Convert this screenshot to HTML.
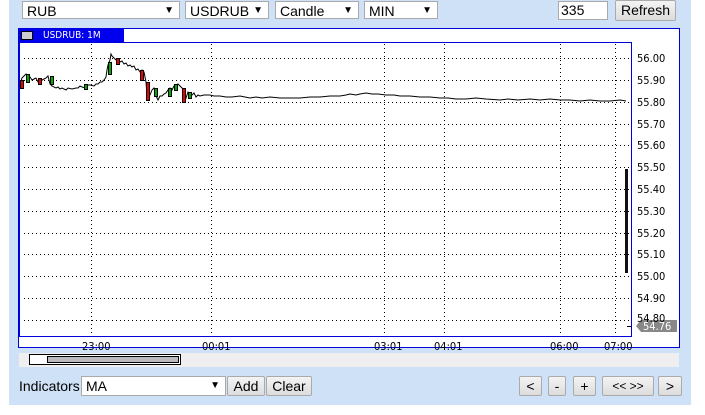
<!DOCTYPE html>
<html><head><style>
body{margin:0;width:705px;height:415px;background:#fff;font-family:"Liberation Sans",sans-serif;position:relative;overflow:hidden}
.a{position:absolute}
.sel{position:absolute;top:1px;height:18px;background:#fff;border:1px solid #aaa;font-size:14px;line-height:18px;padding-left:4px;box-sizing:border-box}
.sel:after{content:"▼";position:absolute;right:5px;top:0;font-size:10px}
.btn{position:absolute;height:20px;background:linear-gradient(#f4f4f4,#dcdcdc);border:1px solid #aaa;border-radius:2px;font-size:14px;line-height:18px;text-align:center;box-sizing:border-box}
.ax{font-size:11px;color:#000;font-family:"DejaVu Sans Condensed","Liberation Sans",sans-serif}
</style></head><body>
<div class="a" style="left:9px;top:0;width:682px;height:405px;background:#cfe1f7"></div>
<div class="sel" style="left:22px;width:158px">RUB</div>
<div class="sel" style="left:185px;width:84px">USDRUB</div>
<div class="sel" style="left:275px;width:84px">Candle</div>
<div class="sel" style="left:364px;width:74px">MIN</div>
<div class="a" style="left:558px;top:1px;width:50px;height:19px;background:#fff;border:1px solid #aaa;box-sizing:border-box;font-size:14px;line-height:17px;padding-left:2px">335</div>
<div class="btn" style="left:615px;top:0;width:61px;height:21px">Refresh</div>
<div class="a" style="left:18px;top:28px;width:662px;height:320px;background:#fff;border:1px solid #0000dd;box-sizing:border-box"></div>
<div class="a" style="left:19px;top:29px;width:105px;height:13px;background:#0000ee;color:#fff;font-size:10px;line-height:13px;padding-left:24px;box-sizing:border-box;font-family:'DejaVu Sans Condensed',sans-serif">USDRUB: 1M</div>
<div class="a" style="left:21px;top:31px;width:12px;height:9px;background:#ccc;border:1px solid #000;box-sizing:border-box"></div>
<svg class="a" style="left:0;top:0" width="705" height="415">
<rect x="19.5" y="42.5" width="612" height="294" fill="none" stroke="#0000dd"/>
<g stroke="#000" stroke-dasharray="1 3" stroke-width="1">
<line x1="24" x2="631" y1="58.5" y2="58.5"/><line x1="24" x2="631" y1="80.5" y2="80.5"/><line x1="24" x2="631" y1="102.5" y2="102.5"/><line x1="24" x2="631" y1="124.5" y2="124.5"/><line x1="24" x2="631" y1="145.5" y2="145.5"/><line x1="24" x2="631" y1="167.5" y2="167.5"/><line x1="24" x2="631" y1="189.5" y2="189.5"/><line x1="24" x2="631" y1="211.5" y2="211.5"/><line x1="24" x2="631" y1="233.5" y2="233.5"/><line x1="24" x2="631" y1="254.5" y2="254.5"/><line x1="24" x2="631" y1="276.5" y2="276.5"/><line x1="24" x2="631" y1="298.5" y2="298.5"/><line x1="24" x2="631" y1="320.5" y2="320.5"/>
<line x1="91.5" x2="91.5" y1="44" y2="336"/><line x1="211.5" x2="211.5" y1="44" y2="336"/><line x1="384.5" x2="384.5" y1="44" y2="336"/><line x1="444.5" x2="444.5" y1="44" y2="336"/><line x1="560.5" x2="560.5" y1="44" y2="336"/><line x1="615.5" x2="615.5" y1="44" y2="336"/>
</g>
<polyline fill="none" stroke="#000" stroke-width="1" points="20,85 22,78 24,76 26,74 28,78 30,77 32,80 34,79 36,78 38,82 40,84 42,80 44,79 46,78 48,76 50,84 52,86 56,88 58,87 60,89 62,88 66,90 68,88 72,89 76,88 78,88 80,86 82,87 86,88 88,85 90,85 94,86 96,84 98,84 100,82 102,82 104,80 106,77 107,70 108,65 110,60 111,54 112,56 114,58 116,60 118,59 120,62 122,61 124,64 126,63 128,66 130,65 132,67 134,66 136,70 138,69 140,72 142,70 144,72 146,82 147,96 148,98 150,95 152,90 154,88 156,96 158,100 160,96 162,96 164,94 166,93 168,90 170,88 172,90 174,86 176,85 178,84 180,86 182,88 184,90 186,98 188,92 190,94 192,95 194,93 196,97 198,95 200,96 204,95 210,95 214,96 220,96 226,97 232,97 240,96 250,98 256,97 262,98 270,97 280,98 290,98 300,98 310,97 320,97 330,96 340,96 346,95 350,94 356,95 360,94 366,93 372,94 378,94 386,95 394,95 400,96 410,96 420,97 430,97 440,98 448,98 456,99 466,99 476,98 486,99 500,100 508,99 518,100 530,99 540,100 550,99 560,100 570,100 580,101 590,100 600,101 610,101 620,100 626,101"/>
<g stroke="#000" stroke-width="1">
<rect x="20.5" y="80.5" width="3" height="8" fill="#e00"/><rect x="26.5" y="74.5" width="3" height="8" fill="#0a0"/><rect x="38.5" y="78.5" width="3" height="6" fill="#e00"/><rect x="50.5" y="76.5" width="3" height="8" fill="#0a0"/><rect x="84.5" y="84.5" width="3" height="5" fill="#0a0"/><rect x="108.5" y="62.5" width="3" height="12" fill="#0a0"/><rect x="116.5" y="58.5" width="3" height="6" fill="#e00"/><rect x="140.5" y="70.5" width="3" height="10" fill="#e00"/><rect x="146.5" y="82.5" width="3" height="18" fill="#e00"/><rect x="154.5" y="88.5" width="3" height="8" fill="#0a0"/><rect x="168.5" y="88.5" width="3" height="8" fill="#0a0"/><rect x="174.5" y="84.5" width="3" height="6" fill="#0a0"/><rect x="182.5" y="88.5" width="3" height="14" fill="#e00"/><rect x="188.5" y="92.5" width="3" height="6" fill="#0a0"/>
</g>
<rect x="625" y="169" width="3" height="104" fill="#111"/>
<line x1="627" x2="631" y1="326.5" y2="326.5" stroke="#000"/>
<polygon points="636,326 641,320 677,320 677,332 641,332" fill="#888"/>
<text x="643" y="330" fill="#fff" class="ax">54.76</text>
<g class="ax"><text x="637" y="62">56.00</text><text x="637" y="84">55.90</text><text x="637" y="106">55.80</text><text x="637" y="128">55.70</text><text x="637" y="149">55.60</text><text x="637" y="171">55.50</text><text x="637" y="193">55.40</text><text x="637" y="215">55.30</text><text x="637" y="237">55.20</text><text x="637" y="258">55.10</text><text x="637" y="280">55.00</text><text x="637" y="302">54.90</text><text x="637" y="322">54.80</text>
<text x="82" y="350">23:00</text><text x="202" y="350">00:01</text><text x="374" y="350">03:01</text><text x="434" y="350">04:01</text><text x="550" y="350">06:00</text><text x="604" y="350">07:00</text></g>
<rect x="19" y="353" width="660" height="14" fill="#efefef"/>
<rect x="29.5" y="354.5" width="151" height="10" fill="#fff" stroke="#000"/>
<rect x="47.5" y="356.5" width="131" height="6" fill="#bbb" stroke="#000"/>
</svg>
<div class="a" style="left:19px;top:378px;font-size:14px">Indicators</div>
<div class="sel" style="left:81px;top:376px;width:145px;height:20px">MA</div>
<div class="btn" style="left:227px;top:376px;width:38px">Add</div>
<div class="btn" style="left:266px;top:376px;width:46px">Clear</div>
<div class="btn" style="left:519px;top:376px;width:23px">&lt;</div>
<div class="btn" style="left:548px;top:376px;width:18px">-</div>
<div class="btn" style="left:573px;top:376px;width:23px">+</div>
<div class="btn" style="left:602px;top:376px;width:52px;font-size:12px">&lt;&lt; &gt;&gt;</div>
<div class="btn" style="left:658px;top:376px;width:24px">&gt;</div>
</body></html>
